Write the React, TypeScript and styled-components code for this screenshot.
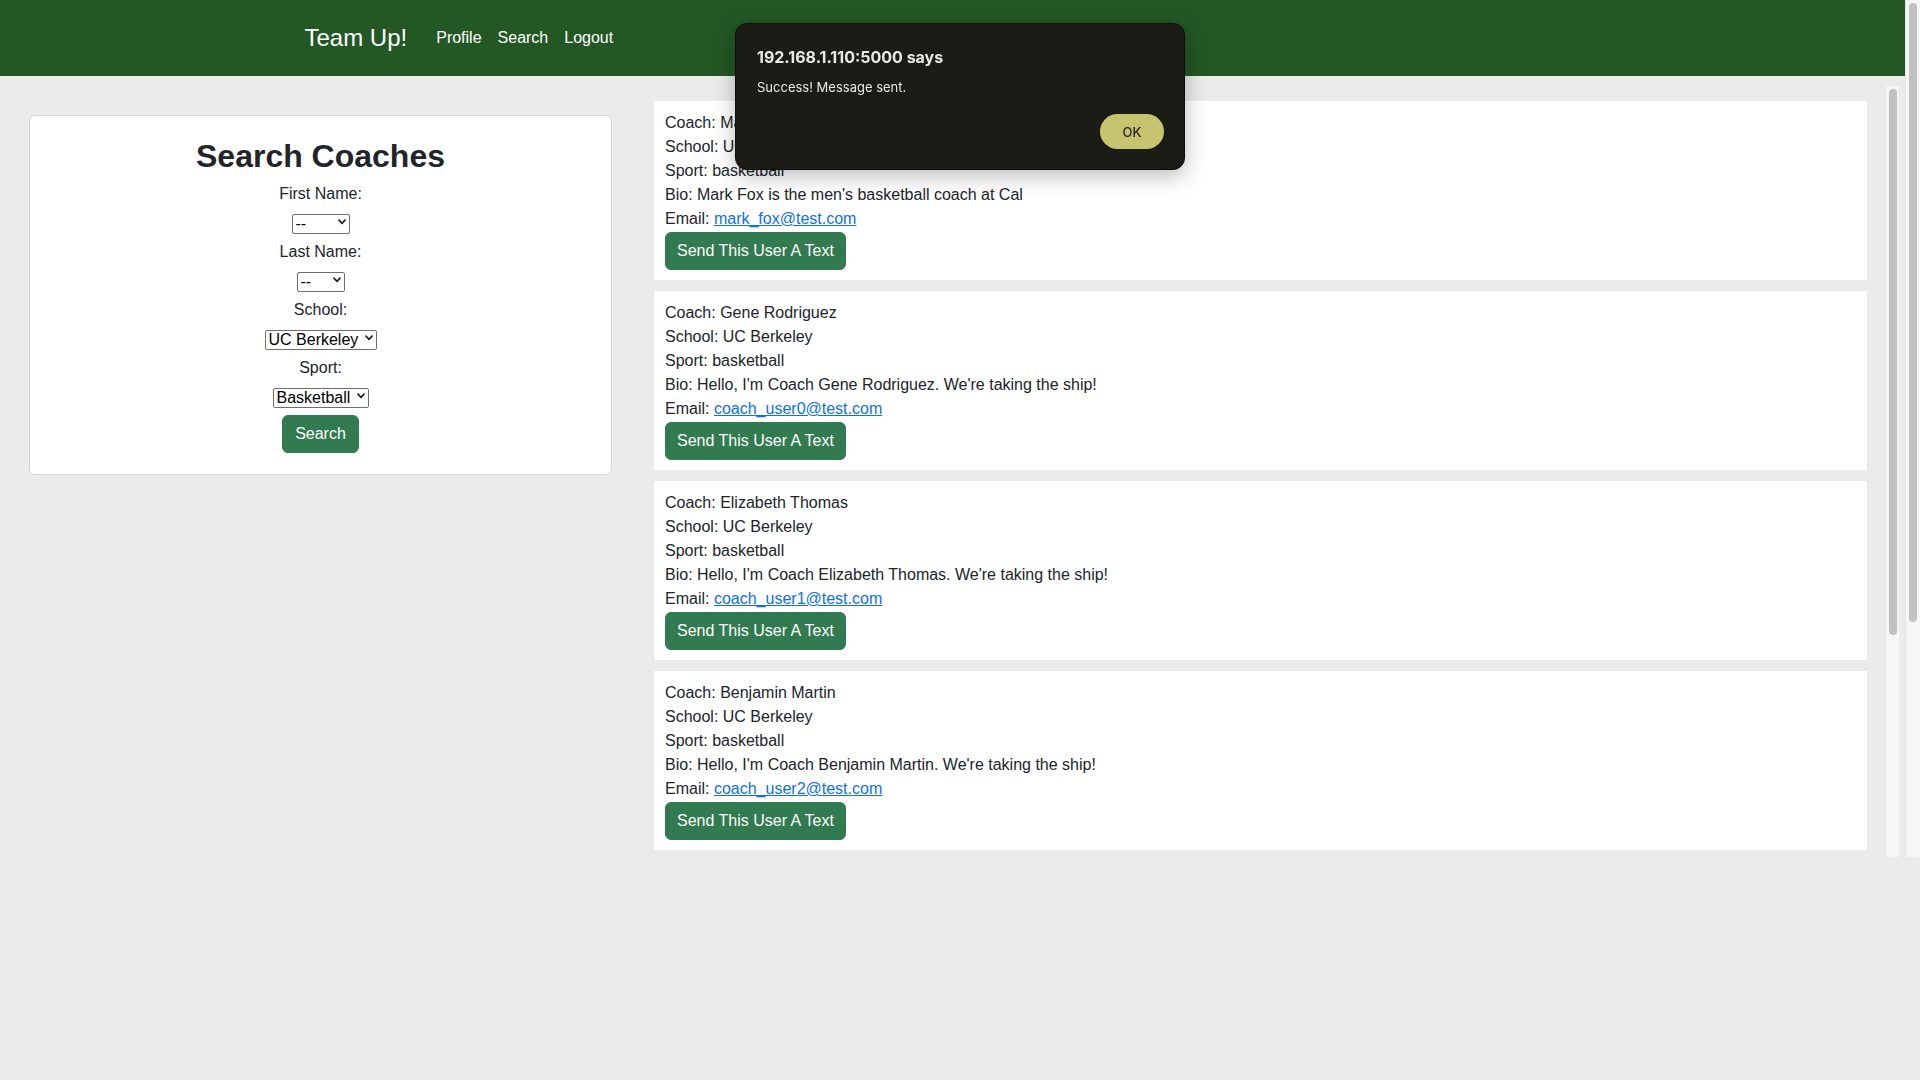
import React from "react";
import styled, { createGlobalStyle } from "styled-components";

const GlobalStyle = createGlobalStyle`
  html, body {
    margin: 0;
    padding: 0;
    background: #ebebeb;
  }
  body {
    font-family: "Liberation Sans", Arial, sans-serif;
    font-size: 16px;
    line-height: 1.5;
    color: #212529;
  }
  * { box-sizing: border-box; }
`;

const Screen = styled.div`
  width: 1920px;
  min-height: 1080px;
  background: #ebebeb;
`;

const Viewport = styled.div`
  display: flex;
  height: 857px;
`;

const Page = styled.div`
  flex: 1;
  display: flex;
  flex-direction: column;
  min-width: 0;
`;

const Navbar = styled.nav`
  height: 76px;
  background: #235824;
  flex: 0 0 auto;
`;

const NavInner = styled.div`
  max-width: 1320px;
  height: 100%;
  margin: 0 auto;
  padding: 0 12px;
  display: flex;
  align-items: center;
`;

const Brand = styled.a`
  font-size: 24px;
  color: #fff;
  text-decoration: none;
  margin-right: 21px;
  line-height: 1.5;
`;

const NavLinks = styled.div`
  display: flex;
  align-items: center;
`;

const NavLink = styled.a`
  color: #fff;
  font-size: 16px;
  padding: 8px;
  text-decoration: none;
`;

const Main = styled.main`
  flex: 1;
  min-height: 0;
  display: flex;
  padding-top: 10px;
`;

const Sidebar = styled.aside`
  flex: 0 0 654px;
  padding: 29px 0 0 29px;
`;

const SearchCard = styled.section`
  width: 583px;
  background: #fff;
  border: 1px solid #d6d6d6;
  border-radius: 6px;
  padding: 21px 20px 21px;
  display: flex;
  flex-direction: column;
  align-items: center;
  text-align: center;
`;

const Heading = styled.h2`
  margin: 0 0 7px;
  font-size: 32px;
  font-weight: 700;
  line-height: 1.2;
  color: #212529;
`;

const FieldLabel = styled.label`
  display: block;
  margin-bottom: 6px;
  line-height: 24px;
`;

const DropdownWrap = styled.div<{ $width: number }>`
  position: relative;
  width: ${(p) => p.$width}px;
  height: 20px;
  margin-bottom: 8px;
`;

const Dropdown = styled.select`
  appearance: none;
  -webkit-appearance: none;
  width: 100%;
  height: 20px;
  border: 1px solid #6f6f6f;
  border-radius: 2px;
  background: #fff;
  color: #000;
  font-family: "Liberation Sans", Arial, sans-serif;
  font-size: 16px;
  line-height: 18px;
  padding: 0 12px 0 3px;
  margin: 0;
  text-align: left;
`;

const Chevron = styled.svg`
  position: absolute;
  right: 4px;
  top: 7px;
  width: 8px;
  height: 6px;
  pointer-events: none;
`;

const GreenButton = styled.button<{ $padX: number; $offset?: number }>`
  background: #327b50;
  border: 1px solid #327b50;
  color: #fff;
  border-radius: 6px;
  font-family: "Liberation Sans", Arial, sans-serif;
  font-size: 16px;
  line-height: 24px;
  padding: 6px ${(p) => p.$padX}px;
  margin-top: ${(p) => p.$offset ?? 0}px;
  cursor: pointer;
`;

const ResultsPane = styled.div`
  flex: 1;
  display: flex;
  min-width: 0;
`;

const ResultsList = styled.div`
  flex: 1;
  display: flex;
  flex-direction: column;
  gap: 11px;
  padding-top: 15px;
  overflow: hidden;
`;

const CoachCard = styled.article`
  flex: 0 0 auto;
  background: #fff;
  padding: 10px 11px 10px;
`;

const Line = styled.p`
  margin: 0;
  line-height: 24px;
`;

const EmailLink = styled.a`
  color: #0d6efd;
  text-decoration: underline;
`;

const CardAction = styled.div`
  margin-top: 1px;
`;

const ScrollTrack = styled.div<{ $width: number }>`
  flex: 0 0 ${(p) => p.$width}px;
  background: #f6f6f6;
  border-left: 1px solid #e6e6e6;
  display: flex;
  justify-content: center;
  padding-top: 3px;
`;

const InnerTrack = styled(ScrollTrack)`
  margin: 0 6px 0 18px;
`;

const ScrollThumb = styled.div<{ $height: number }>`
  width: 8px;
  height: ${(p) => p.$height}px;
  background: #c1c1c1;
  border-radius: 4px;
`;

const AlertBox = styled.div`
  position: fixed;
  left: 735px;
  top: 23px;
  width: 450px;
  height: 147px;
  background: #1c1c17;
  border: 1px solid #0d0d0a;
  border-radius: 12px;
  box-shadow: 0 6px 22px rgba(0, 0, 0, 0.28);
  padding: 23px 20px 20px 21px;
  display: flex;
  flex-direction: column;
  font-family: Inter, "Noto Sans", sans-serif;
  color: #e9e9e4;
`;

const AlertTitle = styled.div`
  font-size: 16px;
  font-weight: 700;
  line-height: 20px;
`;

const AlertMessage = styled.div`
  margin-top: 12px;
  font-size: 13px;
  line-height: 16px;
`;

const AlertActions = styled.div`
  margin-top: auto;
  display: flex;
  justify-content: flex-end;
`;

const AlertOk = styled.button`
  width: 64px;
  height: 35px;
  border: none;
  border-radius: 18px;
  background: #c6c46f;
  color: #25241a;
  font-family: Inter, "Noto Sans", sans-serif;
  font-size: 13px;
  font-weight: 500;
  cursor: pointer;
`;

type SelectProps = { width: number; options: string[] };

function Select({ width, options }: SelectProps) {
  return (
    <DropdownWrap $width={width}>
      <Dropdown defaultValue={options[0]}>
        {options.map((o) => (
          <option key={o}>{o}</option>
        ))}
      </Dropdown>
      <Chevron viewBox="0 0 8 6">
        <path d="M1 1.2 L4 4.4 L7 1.2" fill="none" stroke="#222" strokeWidth="1.7" strokeLinecap="round" strokeLinejoin="round" />
      </Chevron>
    </DropdownWrap>
  );
}

const coaches = [
  {
    name: "Mark Fox",
    bio: "Mark Fox is the men's basketball coach at Cal",
    email: "mark_fox@test.com",
  },
  {
    name: "Gene Rodriguez",
    bio: "Hello, I'm Coach Gene Rodriguez. We're taking the ship!",
    email: "coach_user0@test.com",
  },
  {
    name: "Elizabeth Thomas",
    bio: "Hello, I'm Coach Elizabeth Thomas. We're taking the ship!",
    email: "coach_user1@test.com",
  },
  {
    name: "Benjamin Martin",
    bio: "Hello, I'm Coach Benjamin Martin. We're taking the ship!",
    email: "coach_user2@test.com",
  },
];

export default function App() {
  return (
    <>
      <GlobalStyle />
      <Screen>
        <Viewport>
          <Page>
            <Navbar>
              <NavInner>
                <Brand href="#">Team Up!</Brand>
                <NavLinks>
                  <NavLink href="#">Profile</NavLink>
                  <NavLink href="#">Search</NavLink>
                  <NavLink href="#">Logout</NavLink>
                </NavLinks>
              </NavInner>
            </Navbar>
            <Main>
              <Sidebar>
                <SearchCard>
                  <Heading>Search Coaches</Heading>
                  <FieldLabel>First Name:</FieldLabel>
                  <Select width={58} options={["--"]} />
                  <FieldLabel>Last Name:</FieldLabel>
                  <Select width={48} options={["--"]} />
                  <FieldLabel>School:</FieldLabel>
                  <Select width={112} options={["UC Berkeley"]} />
                  <FieldLabel>Sport:</FieldLabel>
                  <Select width={96} options={["Basketball"]} />
                  <GreenButton $padX={12} $offset={1}>Search</GreenButton>
                </SearchCard>
              </Sidebar>
              <ResultsPane>
                <ResultsList>
                  {coaches.map((c) => (
                    <CoachCard key={c.email}>
                      <Line>Coach: {c.name}</Line>
                      <Line>School: UC Berkeley</Line>
                      <Line>Sport: basketball</Line>
                      <Line>Bio: {c.bio}</Line>
                      <Line>
                        Email: <EmailLink href="#">{c.email}</EmailLink>
                      </Line>
                      <CardAction>
                        <GreenButton $padX={11}>Send This User A Text</GreenButton>
                      </CardAction>
                    </CoachCard>
                  ))}
                </ResultsList>
                <InnerTrack $width={14}>
                  <ScrollThumb $height={546} />
                </InnerTrack>
              </ResultsPane>
            </Main>
          </Page>
          <ScrollTrack $width={15}>
            <ScrollThumb $height={619} />
          </ScrollTrack>
        </Viewport>
        <AlertBox role="alertdialog">
          <AlertTitle>192.168.1.110:5000 says</AlertTitle>
          <AlertMessage>Success! Message sent.</AlertMessage>
          <AlertActions>
            <AlertOk>OK</AlertOk>
          </AlertActions>
        </AlertBox>
      </Screen>
    </>
  );
}
